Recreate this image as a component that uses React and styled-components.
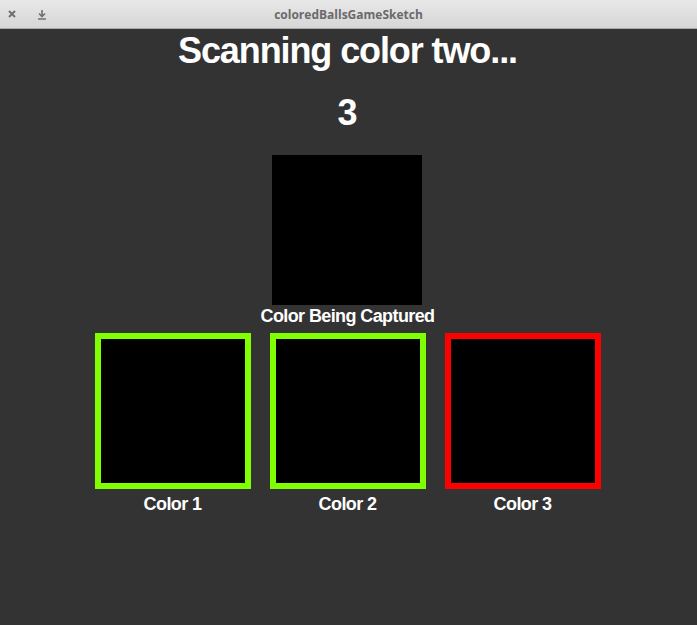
import React from "react";
import styled, { createGlobalStyle } from "styled-components";

const GlobalStyle = createGlobalStyle`
  html, body {
    margin: 0;
    padding: 0;
    background: #333333;
  }
`;

const Window = styled.div`
  width: 697px;
  height: 625px;
  display: flex;
  flex-direction: column;
  background: #333333;
  overflow: hidden;
`;

const TitleBar = styled.div`
  height: 29px;
  flex: none;
  display: flex;
  align-items: center;
  position: relative;
  background: linear-gradient(#e8e8e8, #d6d6d6);
  border-bottom: 1px solid #a9a9a9;
  box-sizing: border-box;
`;

const BarButtons = styled.div`
  display: flex;
  align-items: center;
  gap: 20px;
  padding-left: 7px;
  color: #707070;
`;

const BarTitle = styled.div`
  position: absolute;
  left: 0;
  right: 0;
  text-align: center;
  font-family: "Open Sans", "Noto Sans", sans-serif;
  font-weight: 700;
  font-size: 12px;
  color: #6a6a6a;
  pointer-events: none;
`;

const Stage = styled.div`
  flex: 1;
  display: flex;
  flex-direction: column;
  align-items: center;
  padding-right: 2px;
  color: #ffffff;
  font-family: "Liberation Sans", Arial, sans-serif;
`;

const Heading = styled.h1`
  margin: 2px 0 0;
  font-size: 36px;
  line-height: 40px;
  font-weight: 700;
  letter-spacing: -1.1px;
`;

const Countdown = styled.div`
  margin-top: 22px;
  font-size: 36px;
  line-height: 40px;
  font-weight: 700;
`;

const Swatch = styled.div`
  box-sizing: border-box;
  width: ${(p) => p.size}px;
  height: ${(p) => p.size}px;
  background: ${(p) => p.fill || "#000"};
  border: ${(p) => (p.ring ? `6px solid ${p.ring}` : "none")};
`;

const CaptureArea = styled.div`
  margin-top: 22px;
  display: flex;
  flex-direction: column;
  align-items: center;
`;

const Label = styled.div`
  font-size: 18px;
  line-height: 20px;
  font-weight: 700;
  letter-spacing: -0.6px;
  margin-top: ${(p) => p.gap || 0}px;
`;

const SlotRow = styled.div`
  margin-top: 7px;
  display: flex;
  gap: 19px;
`;

const Slot = styled.div`
  display: flex;
  flex-direction: column;
  align-items: center;
`;

const CloseIcon = () => (
  <svg width="10" height="10" viewBox="0 0 10 10">
    <path d="M2 2 L8 8 M8 2 L2 8" stroke="#707070" strokeWidth="2" />
  </svg>
);

const DownloadIcon = () => (
  <svg width="10" height="11" viewBox="0 0 10 11">
    <path d="M5 1 V7 M2 4.5 L5 7.5 L8 4.5 M1 10 H9" stroke="#707070" strokeWidth="1.6" fill="none" />
  </svg>
);

const slots = [
  { name: "Color 1", ring: "#7fff00" },
  { name: "Color 2", ring: "#7fff00" },
  { name: "Color 3", ring: "#ff0000" },
];

export default function App() {
  return (
    <Window>
      <GlobalStyle />
      <TitleBar>
        <BarButtons>
          <CloseIcon />
          <DownloadIcon />
        </BarButtons>
        <BarTitle>coloredBallsGameSketch</BarTitle>
      </TitleBar>

      <Stage>
        <Heading>Scanning color two...</Heading>
        <Countdown>3</Countdown>

        <CaptureArea>
          <Swatch size={150} />
          <Label gap={1}>Color Being Captured</Label>
        </CaptureArea>

        <SlotRow>
          {slots.map((s) => (
            <Slot key={s.name}>
              <Swatch size={156} ring={s.ring} />
              <Label gap={5}>{s.name}</Label>
            </Slot>
          ))}
        </SlotRow>
      </Stage>
    </Window>
  );
}
